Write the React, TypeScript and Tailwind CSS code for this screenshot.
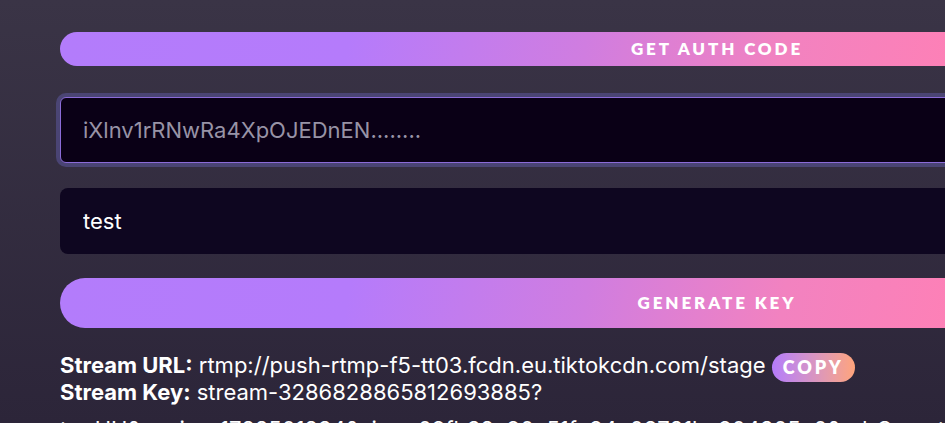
import React from "react";

const gradientBtn =
	"bg-[linear-gradient(100deg,#b37cfb_0%,#b57bfb_22%,#d07de0_40%,#f282c0_55%,#ff80b5_70%,#ff80b5_100%)]";

function GradientButton({
	label,
	className,
}: {
	label: string;
	className?: string;
}) {
	return (
		<button
			type="button"
			className={`flex w-full items-center justify-center rounded-full font-['Lato',sans-serif] font-extrabold uppercase tracking-[0.17em] text-white ${gradientBtn} ${className ?? ""}`}
		>
			{label}
		</button>
	);
}

export default function App() {
	return (
		<div className="h-[423px] w-[945px] overflow-hidden bg-gradient-to-b from-[#3a3446] to-[#2c2539] font-['Inter',sans-serif]">
			<div className="ml-[60px] w-[1314px] pt-8">
				<GradientButton label="Get auth code" className="h-[34px] text-[17px]" />

				<div className="mt-[31px] flex flex-col gap-[25px]">
					<input
						readOnly
						placeholder="iXlnv1rRNwRa4XpOJEDnEN........"
						className="h-[66px] w-full rounded-md border border-[#8b6bd8] bg-[#0a0016] px-[22px] text-[22px] text-white shadow-[0_0_0_4px_rgba(88,84,150,0.6)] outline-none placeholder:text-[#9893a6]"
					/>
					<input
						readOnly
						value="test"
						className="h-[66px] w-full rounded-lg bg-[#0e0620] px-[23px] text-[22px] text-white outline-none"
					/>
				</div>

				<GradientButton label="Generate key" className="mt-6 h-[50px] text-[17px]" />

				<div className="mt-[23px] w-[885px] text-[22px] text-white">
					<p className="leading-[28px]">
						<span className="font-bold">Stream URL:</span>{" "}
						rtmp://push-rtmp-f5-tt03.fcdn.eu.tiktokcdn.com/stage{" "}
						<button
							type="button"
							className="-my-1 inline-flex h-[29px] items-center rounded-full bg-gradient-to-r from-[#b57bfb] to-[#ffa47a] px-[11px] align-middle font-['Lato',sans-serif] text-[18px] font-extrabold tracking-[0.16em] text-white"
						>
							COPY
						</button>
					</p>
					<p className="-mt-[5px] leading-[37px]">
						<span className="font-bold">Stream Key:</span>{" "}
						stream-3286828865812693885?
						t=uHU&amp;expire=1722501234&amp;sign=09fb32c90a51fe94e08721bc904305e0&amp;ad_Secret
					</p>
				</div>
			</div>
		</div>
	);
}
